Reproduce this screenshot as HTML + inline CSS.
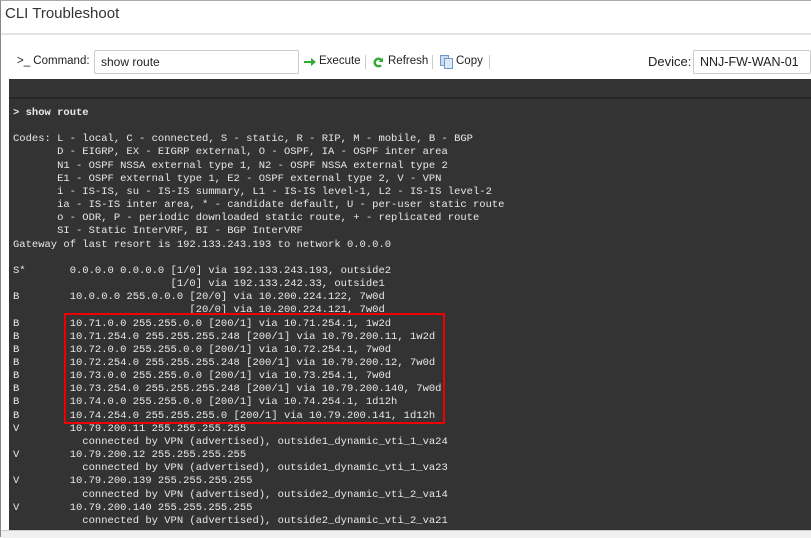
<!DOCTYPE html>
<html><head><meta charset="utf-8"><style>
body{margin:0;width:811px;height:537px;overflow:hidden;background:#fff;font-family:"Liberation Sans",sans-serif;position:relative}
.frame{position:absolute;left:0;top:0;width:811px;height:537px;border-left:1px solid #888;border-top:1px solid #aaa;box-sizing:border-box}
.title{position:absolute;left:5px;top:5px;font-size:15px;color:#333}
.hline{position:absolute;left:1px;right:0;top:33px;height:2px;background:#e4e4e4}
.tb{position:absolute;top:55px;font-size:11.5px;color:#222}
.inp{position:absolute;top:50px;height:24px;border:1px solid #ccc;border-radius:2px;box-sizing:border-box;font-size:12px;padding:4px 6px;color:#222}
.sep{position:absolute;top:55px;width:1px;height:14px;background:#ccc}
.term{position:absolute;left:9px;top:79px;width:802px;height:451px;background:#333}
.term .l{position:absolute;left:0;right:0;top:18px;height:2px;background:#262626}
pre{position:absolute;left:13px;top:107px;margin:0;font-family:"Liberation Mono",monospace;font-size:10.5px;line-height:13.15px;color:#e8e8e8}
.box{position:absolute;left:64px;top:313px;width:381px;height:111px;border:2px solid #e00;box-sizing:border-box}
.bottom{position:absolute;left:1px;top:530px;width:810px;height:7px;background:#f0f0f0;border-top:1px solid #ccc}
</style></head><body>
<div class="frame"></div>
<div class="title">CLI Troubleshoot</div>
<div class="hline"></div>
<div class="tb" style="left:17px">&gt;_ Command:</div>
<div class="inp" style="left:94px;width:205px">show route</div>
<svg style="position:absolute;left:304px;top:58px" width="12" height="8"><path d="M0 3h7V0l5 4-5 4V5H0z" fill="#3a3"/></svg>
<div class="tb" style="left:319px">Execute</div>
<div class="sep" style="left:365px"></div>
<svg style="position:absolute;left:372px;top:56px" width="12" height="13"><path d="M10 3A5 5 0 1 0 10 10L8 8.5A2.5 2.5 0 1 1 8 4.5L6.5 6H11V1z" fill="#3a3"/></svg>
<div class="tb" style="left:388px">Refresh</div>
<div class="sep" style="left:432px"></div>
<svg style="position:absolute;left:440px;top:55px" width="14" height="15"><rect x="0.5" y="0.5" width="8" height="10" fill="#cde" stroke="#6a9ad0"/><rect x="4.5" y="3.5" width="8" height="10" fill="#dde8f5" stroke="#6a9ad0"/></svg>
<div class="tb" style="left:456px">Copy</div>
<div class="sep" style="left:489px"></div>
<div class="tb" style="left:648px;font-size:13px;top:54px">Device:</div>
<div class="inp" style="left:693px;width:118px;font-size:12.5px">NNJ-FW-WAN-01</div>
<div class="term"><div class="l"></div></div>
<pre><b>&gt; show route</b>

Codes: L - local, C - connected, S - static, R - RIP, M - mobile, B - BGP
       D - EIGRP, EX - EIGRP external, O - OSPF, IA - OSPF inter area
       N1 - OSPF NSSA external type 1, N2 - OSPF NSSA external type 2
       E1 - OSPF external type 1, E2 - OSPF external type 2, V - VPN
       i - IS-IS, su - IS-IS summary, L1 - IS-IS level-1, L2 - IS-IS level-2
       ia - IS-IS inter area, * - candidate default, U - per-user static route
       o - ODR, P - periodic downloaded static route, + - replicated route
       SI - Static InterVRF, BI - BGP InterVRF
Gateway of last resort is 192.133.243.193 to network 0.0.0.0

S*       0.0.0.0 0.0.0.0 [1/0] via 192.133.243.193, outside2
                         [1/0] via 192.133.242.33, outside1
B        10.0.0.0 255.0.0.0 [20/0] via 10.200.224.122, 7w0d
                            [20/0] via 10.200.224.121, 7w0d
B        10.71.0.0 255.255.0.0 [200/1] via 10.71.254.1, 1w2d
B        10.71.254.0 255.255.255.248 [200/1] via 10.79.200.11, 1w2d
B        10.72.0.0 255.255.0.0 [200/1] via 10.72.254.1, 7w0d
B        10.72.254.0 255.255.255.248 [200/1] via 10.79.200.12, 7w0d
B        10.73.0.0 255.255.0.0 [200/1] via 10.73.254.1, 7w0d
B        10.73.254.0 255.255.255.248 [200/1] via 10.79.200.140, 7w0d
B        10.74.0.0 255.255.0.0 [200/1] via 10.74.254.1, 1d12h
B        10.74.254.0 255.255.255.0 [200/1] via 10.79.200.141, 1d12h
V        10.79.200.11 255.255.255.255
           connected by VPN (advertised), outside1_dynamic_vti_1_va24
V        10.79.200.12 255.255.255.255
           connected by VPN (advertised), outside1_dynamic_vti_1_va23
V        10.79.200.139 255.255.255.255
           connected by VPN (advertised), outside2_dynamic_vti_2_va14
V        10.79.200.140 255.255.255.255
           connected by VPN (advertised), outside2_dynamic_vti_2_va21</pre>
<div class="box"></div>
<div class="bottom"></div>
</body></html>
